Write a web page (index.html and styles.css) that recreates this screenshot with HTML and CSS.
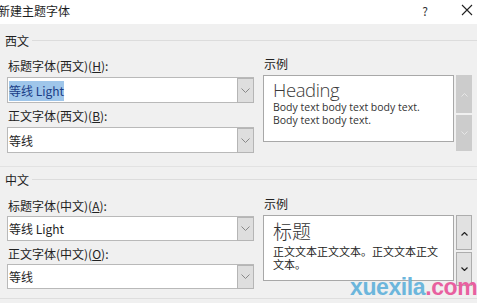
FILE: index.html
```html
<!DOCTYPE html>
<html lang="zh-CN">

<head>
    <meta charset="UTF-8">
    <meta name="viewport" content="width=device-width, initial-scale=1.0">
    <title>新建主题字体</title>
    <link rel="stylesheet" href="styles.css">
</head>

<body>
    <div class="titlebar">
        <span class="title">新建主题字体</span>
        <span class="help">?</span>
        <span class="close">
            <svg width="12" height="12" viewBox="0 0 12 12"><path d="M1 1L11 11M11 1L1 11" stroke="#222" stroke-width="1.1" fill="none"/></svg>
        </span>
    </div>

    <div class="dialog">
        <div class="group">
            <div class="legend"><span>西文</span></div>
            <div class="group-body">
                <div class="fields">
                    <div class="label">标题字体(西文)(<u>H</u>):</div>
                    <div class="combo">
                        <span class="value"><span class="selected">等线 Light</span></span>
                        <span class="drop"><svg width="9" height="5" viewBox="0 0 9 5"><path d="M0.5 0.5L4.5 4.5L8.5 0.5" stroke="#888" fill="none"/></svg></span>
                    </div>
                    <div class="label">正文字体(西文)(<u>B</u>):</div>
                    <div class="combo">
                        <span class="value">等线</span>
                        <span class="drop"><svg width="9" height="5" viewBox="0 0 9 5"><path d="M0.5 0.5L4.5 4.5L8.5 0.5" stroke="#888" fill="none"/></svg></span>
                    </div>
                </div>
                <div class="sample">
                    <div class="label">示例</div>
                    <div class="sample-row">
                        <div class="preview latin">
                            <div class="heading">Heading</div>
                            <div class="body-text">Body text body text body text.<br>Body text body text.</div>
                        </div>
                        <div class="scroll disabled">
                            <span class="up"><svg width="7" height="4" viewBox="0 0 7 4"><path d="M0.5 3.5L3.5 0.5L6.5 3.5" stroke="#e6e6e6" fill="none"/></svg></span>
                            <span class="down"><svg width="7" height="4" viewBox="0 0 7 4"><path d="M0.5 0.5L3.5 3.5L6.5 0.5" stroke="#e6e6e6" fill="none"/></svg></span>
                        </div>
                    </div>
                </div>
            </div>
        </div>

        <div class="separator"></div>

        <div class="group">
            <div class="legend"><span>中文</span></div>
            <div class="group-body second">
                <div class="fields">
                    <div class="label">标题字体(中文)(<u>A</u>):</div>
                    <div class="combo">
                        <span class="value">等线 Light</span>
                        <span class="drop"><svg width="9" height="5" viewBox="0 0 9 5"><path d="M0.5 0.5L4.5 4.5L8.5 0.5" stroke="#888" fill="none"/></svg></span>
                    </div>
                    <div class="label">正文字体(中文)(<u>O</u>):</div>
                    <div class="combo">
                        <span class="value">等线</span>
                        <span class="drop"><svg width="9" height="5" viewBox="0 0 9 5"><path d="M0.5 0.5L4.5 4.5L8.5 0.5" stroke="#888" fill="none"/></svg></span>
                    </div>
                </div>
                <div class="sample">
                    <div class="label">示例</div>
                    <div class="sample-row">
                        <div class="preview cjk">
                            <div class="heading">标题</div>
                            <div class="body-text">正文文本正文文本。正文文本正文<br>文本。</div>
                        </div>
                        <div class="scroll">
                            <span class="up"><svg width="7" height="4" viewBox="0 0 7 4"><path d="M0.5 3.5L3.5 0.5L6.5 3.5" stroke="#222" stroke-width="1.2" fill="none"/></svg></span>
                            <span class="down"><svg width="7" height="4" viewBox="0 0 7 4"><path d="M0.5 0.5L3.5 3.5L6.5 0.5" stroke="#222" stroke-width="1.2" fill="none"/></svg></span>
                        </div>
                    </div>
                </div>
            </div>
        </div>

        <div class="footer-line"></div>
        <div class="footer-line dark"></div>
    </div>

    <div class="watermark">xuexila<span class="dotcom">.com</span></div>
</body>

</html>
```

FILE: styles.css
```css
* {
    padding: 0;
    margin: 0;
    box-sizing: border-box;
}

body {
    width: 477px;
    height: 303px;
    overflow: hidden;
    position: relative;
    background: #f0f0f0;
    color: #1e1e1e;
    font-family: "Noto Sans CJK SC", "Noto Sans", sans-serif;
    font-size: 12px;
}

.titlebar {
    height: 24px;
    background: #fff;
    display: flex;
    align-items: center;
}

.title {
    flex: 1;
    margin-left: -2px;
    font-size: 12px;
    line-height: 16px;
    margin-top: -3px;
}

.help {
    font-size: 12px;
    margin-right: 33px;
    margin-top: -4px;
    color: #333;
}

.close {
    display: flex;
    margin-right: 4px;
    margin-top: -4px;
}

.dialog {
    padding-top: 8px;
}

.legend {
    height: 18px;
    display: flex;
    align-items: center;
    padding-left: 5px;
}

.legend span {
    line-height: 16px;
    font-size: 12px;
}

.legend::after {
    content: "";
    flex: 1;
    height: 1px;
    background: #dcdcdc;
    margin-left: 3px;
    margin-top: -1px;
}

.group-body {
    display: flex;
    padding-left: 7px;
    padding-top: 8px;
}

.group-body.second {
    padding-top: 9px;
}

.fields {
    width: 247px;
}

.label {
    height: 16px;
    line-height: 16px;
    padding-left: 1px;
    font-size: 12px;
    color: #222;
}

.combo {
    height: 26px;
    margin-top: 3px;
    margin-bottom: 5px;
    background: #fff;
    border: 1px solid #b9b9b9;
    display: flex;
    align-items: center;
}

.second .combo {
    height: 25px;
    margin-top: 2px;
    margin-bottom: 5px;
}

.value {
    flex: 1;
    padding-left: 1px;
    font-size: 12px;
}

.selected {
    background: #9fc6ea;
    color: #1a3d86;
    padding: 1px 0 2px;
}

.drop {
    width: 17px;
    height: 25px;
    margin-right: -1px;
    background: #dedede;
    border: 1px solid #b5b5b5;
    display: flex;
    align-items: center;
    justify-content: center;
}

.second .drop {
    height: 24px;
}

.sample {
    margin-left: 9px;
    width: 209px;
}

.sample .label {
    height: 14px;
    line-height: 14px;
    margin-top: -1px;
    margin-bottom: 4px;
}

.sample-row {
    display: flex;
    gap: 2px;
}

.preview {
    width: 191px;
    background: #fff;
    border: 1px solid #a8a8a8;
    padding: 2px 0 0 9px;
}

.latin {
    height: 67px;
}

.latin .heading {
    font-family: "Open Sans", sans-serif;
    font-weight: 300;
    font-size: 18.5px;
    letter-spacing: -0.4px;
    line-height: 23px;
    color: #3a3a3a;
}

.latin .body-text {
    font-family: "Open Sans", sans-serif;
    font-size: 10.5px;
    line-height: 12.5px;
    color: #333;
}

.cjk {
    height: 66px;
    padding-top: 3px;
}

.cjk .heading {
    font-weight: 300;
    font-size: 19px;
    line-height: 24px;
    color: #333;
}

.cjk .body-text {
    font-size: 11px;
    line-height: 13px;
    margin-top: 2px;
    color: #222;
}

.scroll {
    width: 16px;
    display: flex;
    flex-direction: column;
    gap: 2px;
}

.scroll span {
    display: flex;
    align-items: center;
    justify-content: center;
    background: #e1e1e1;
    border: 1px solid #adadad;
}

.scroll .up {
    height: 35px;
    padding-top: 2px;
}

.scroll .down {
    height: 34px;
}

.scroll.disabled span {
    background: #cccccc;
    border-color: #cccccc;
}

.scroll.disabled .up {
    height: 38px;
}

.scroll.disabled .down {
    height: 36px;
}

.separator {
    height: 1px;
    background: #e2e2e2;
    margin: 8px 0 4px;
}

.footer-line {
    height: 1px;
    background: #dedede;
    margin-top: 4px;
}

.footer-line.dark {
    margin-top: 7px;
    margin-left: 58px;
    background: #c8c8c8;
}

.watermark {
    position: absolute;
    left: 350px;
    top: 274px;
    font-family: "Liberation Sans", Arial, sans-serif;
    font-weight: bold;
    font-size: 23px;
    letter-spacing: -0.4px;
    color: #6cb6dc;
}

.dotcom {
    color: #e8609f;
}
```
